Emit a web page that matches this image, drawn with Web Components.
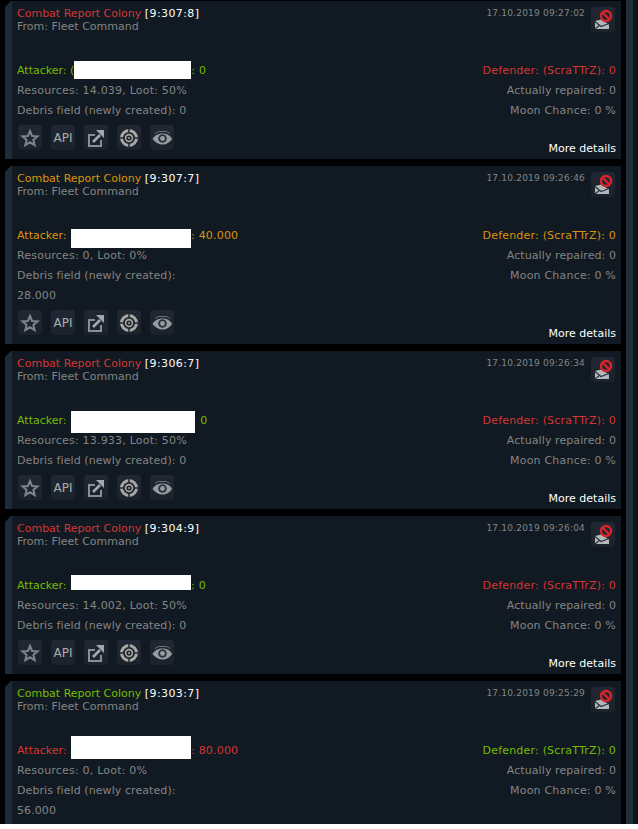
<!DOCTYPE html>
<html>
<head>
<meta charset="utf-8">
<title>Combat reports</title>
<style>
html,body{margin:0;padding:0;background:#fff;}
</style>
</head>
<body>
<message-list>
  <combat-report title-color="red" coords="[9:307:8]" date="17.10.2019 09:27:02" att-color="green" att-tail=": 0" def-color="red" res="Resources: 14.039, Loot: 50%" debris="0" rx="0" rr="0" rw="117" rh="18" rd="5" att-pre="Attacker: ("></combat-report>
  <combat-report title-color="orange" coords="[9:307:7]" date="17.10.2019 09:26:46" att-color="orange" att-tail=": 40.000" def-color="orange" res="Resources: 0, Loot: 0%" debris="28.000" rx="1" rr="0" rw="120" rh="19" rd="9" att-pre="Attacker: "></combat-report>
  <combat-report title-color="red" coords="[9:306:7]" date="17.10.2019 09:26:34" att-color="green" att-tail=" 0" def-color="red" res="Resources: 13.933, Loot: 50%" debris="0" rx="1" rr="1.500" rw="124" rh="22" rd="9" att-pre="Attacker: "></combat-report>
  <combat-report title-color="red" coords="[9:304:9]" date="17.10.2019 09:26:04" att-color="green" att-tail=": 0" def-color="red" res="Resources: 14.002, Loot: 50%" debris="0" rx="1" rr="0" rw="120" rh="15" rd="1" att-pre="Attacker: "></combat-report>
  <combat-report no-foot title-color="green" coords="[9:303:7]" date="17.10.2019 09:25:29" att-color="red" att-tail=": 80.000" def-color="green" res="Resources: 0, Loot: 0%" debris="56.000" rx="1" rr="0" rw="120" rh="23" rd="5" att-pre="Attacker: "></combat-report>
</message-list>
<script>
const colors={red:'#d43635',green:'#76bb00',orange:'#dc930b'}

const icons={
  star:`<svg width="24" height="25" viewBox="0 0 24 25"><path d="M12 6l2.100 5 5.400.4-4.100 3.500 1.300 5.300-4.700-2.900-4.700 2.900 1.300-5.300-4.100-3.500 5.400-.4z" fill="none" stroke="#7c838c" stroke-width="2"/></svg>`,
  api:`<span class="api">API</span>`,
  share:`<svg width="24" height="25" viewBox="0 0 24 25"><path d="M11 10H5v11h12v-6" fill="none" stroke="#8a8f95" stroke-width="2"/><path d="M9 17l7-7" stroke="#a4a8ad" stroke-width="2.600"/><path d="M12 5h8v8z" fill="#a4a8ad"/></svg>`,
  target:`<svg width="24" height="25" viewBox="0 0 24 25"><g fill="none" stroke="#a8a8a4"><circle cx="12" cy="13" r="7.500" stroke-width="3"/><circle cx="12" cy="13" r="3.400" stroke-width="1.600"/></g><path d="M12 3v5M12 18v5M2 13h5M17 13h5" stroke="#1f2731" stroke-width="1.500"/><circle cx="12" cy="13" r="1" fill="#a8a8a4"/></svg>`,
  eye:`<svg width="24" height="25" viewBox="0 0 24 25"><path d="M2.500 14C5 10 8.500 8.500 12.500 8.500S20 10 22 14C20 17.500 16 19.500 12.500 19.500S5 17.500 2.500 14z" fill="#989ca0"/><circle cx="12.500" cy="13.500" r="4.300" fill="#2a323d"/><circle cx="12.500" cy="13.500" r="2.400" fill="#989ca0"/><path d="M5 8.500l3.500-2h8L20 8.500" fill="none" stroke="#6c737c" stroke-width="1"/></svg>`,
  del:`<svg width="24" height="24" viewBox="0 0 24 24"><path d="M4 13l6-1.500 8 5V21H4z" fill="#b4b8bb"/><path d="M4 13.500l6 5 8-3M4 21l5-4" fill="none" stroke="#2a323d" stroke-width="1.200"/><circle cx="15" cy="8" r="5" fill="#1f2731" stroke="#d8242a" stroke-width="2.400"/><path d="M11.500 4.500l7 7" stroke="#d8242a" stroke-width="2.400"/></svg>`
}

class MessageList extends HTMLElement{
    constructor(){
        super();
        this.attachShadow({mode:'open'})
        this.shadowRoot.innerHTML=`
        <style>
        :host{
            display: flex;
            width: 638px;
            height: 824px;
            overflow: hidden;
            background-color: #000;
        }
        .list{
            width: 621px;
            padding: 1px 0 0 5px;
            box-sizing: border-box;
            display: flex;
            flex-direction: column;
            gap: 7px;
        }
        ::slotted(combat-report){
            flex: none;
        }
        .track{
            width: 7px;
            margin-left: 5px;
            background-color: #1e2d3a;
        }
        .edge{
            flex: 1;
            background-color: #0d1319;
        }
        </style>
        <div class="list"><slot></slot></div>
        <div class="track"></div>
        <div class="edge"></div>
        `
    }
}

class ActionButton extends HTMLElement{
    constructor(){
        super();
        this.attachShadow({mode:'open'})
        this.shadowRoot.innerHTML=`
        <style>
        :host{
            display: flex;
            align-items: center;
            justify-content: center;
            width: 24px;
            height: 25px;
            border-radius: 4px;
            background: linear-gradient(#212833,#1b222b);
            flex: none;
        }
        .api{
            font: 12px "DejaVu Sans",sans-serif;
            color: #a9adb1;
        }
        svg{display:block;}
        </style>
        ${icons[this.getAttribute('icon')]}
        `
    }
}

class CombatReport extends HTMLElement{
    constructor(){
        super();
        this.attachShadow({mode:'open'})
        const a=n=>this.getAttribute(n)
        // white box over the name, zero height in the line so it can't push the rows
        const rh=+a('rh'),rd=+a('rd')
        const foot=this.hasAttribute('no-foot')?'':`
            <div class="foot">
                <div class="actions">
                    <action-button icon="star"></action-button>
                    <action-button icon="api"></action-button>
                    <action-button icon="share"></action-button>
                    <action-button icon="target"></action-button>
                    <action-button icon="eye"></action-button>
                </div>
                <span class="more">More details</span>
            </div>`
        this.shadowRoot.innerHTML=`
        <style>
        :host{
            display: block;
            background-color: #111a22;
            font: 11px/20px "DejaVu Sans",sans-serif;
            color: #848484;
            clip-path: polygon(6px 0,100% 0,100% 100%,0 100%,0 6px);
        }
        .card{
            border-left: 7px solid #1b2b39;
            padding: 6px 5px 9px 5px;
        }
        .head{
            display: flex;
            justify-content: space-between;
            height: 54px;
        }
        .title{
            line-height: 13px;
        }
        .subject{color:${colors[a('title-color')]};}
        .coords{color:#fff;letter-spacing:.4px;}
        .meta{
            display: flex;
            gap: 6px;
        }
        .date{
            font-size: 9px;
            line-height: 13px;
            letter-spacing: .2px;
        }
        .data{
            display: flex;
            justify-content: space-between;
        }
        .left{max-width:190px;}
        .right{text-align:right;}
        .res,.def,.moon,.tail{letter-spacing:.2px;}
        .debris,.repaired{letter-spacing:.08px;}
        .att{white-space:nowrap;color:${colors[a('att-color')]};}
        .def{color:${colors[a('def-color')]};}
        .redact{
            display: inline-block;
            width: ${a('rw')}px;
            height: ${rh}px;
            margin: ${rd-rh}px ${a('rr')}px ${-rd}px ${a('rx')}px;
            background-color: #fff;
        }
        .foot{
            display: flex;
            justify-content: space-between;
            align-items: flex-end;
            margin-top: 4px;
        }
        .actions{
            display: flex;
            gap: 9px;
            margin-left: 1px;
        }
        .more{
            color: #fff;
            margin-bottom: -9px;
        }
        .del{margin-right:1px;}
        </style>
        <div class="card">
            <div class="head">
                <div class="title">
                    <div><span class="subject">Combat Report Colony</span> <span class="coords">${a('coords')}</span></div>
                    <div>From: Fleet Command</div>
                </div>
                <div class="meta">
                    <span class="date">${a('date')}</span>
                    <action-button class="del" icon="del"></action-button>
                </div>
            </div>
            <div class="data">
                <div class="left">
                    <div class="att">${a('att-pre')}<span class="redact"></span><span class="tail">${a('att-tail')}</span></div>
                    <div class="res">${a('res')}</div>
                    <div class="debris">Debris field (newly created): ${a('debris')}</div>
                </div>
                <div class="right">
                    <div class="def">Defender: (ScraTTrZ): 0</div>
                    <div class="repaired">Actually repaired: 0</div>
                    <div class="moon">Moon Chance: 0 %</div>
                </div>
            </div>
            ${foot}
        </div>
        `
    }
}

customElements.define('action-button',ActionButton);
customElements.define('message-list',MessageList);
customElements.define('combat-report',CombatReport);
</script>
</body>
</html>
